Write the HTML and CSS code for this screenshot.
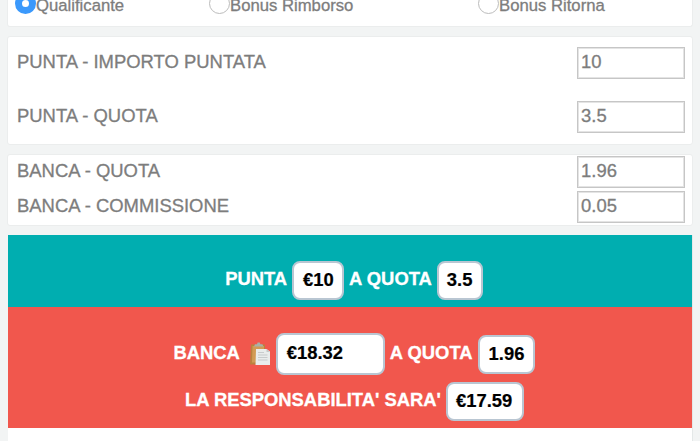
FILE: index.html
```html
<!DOCTYPE html>
<html lang="it">
<head>
<meta charset="utf-8">
<title>Calcolatore Punta Banca</title>
<link rel="stylesheet" href="styles.css">
</head>
<body>
<main class="page">
  <section class="card modes">
    <label class="mode"><span class="radio checked"></span><span class="mode-name">Qualificante</span></label>
    <label class="mode"><span class="radio"></span><span class="mode-name">Bonus Rimborso</span></label>
    <label class="mode"><span class="radio"></span><span class="mode-name">Bonus Ritorna</span></label>
  </section>
  <section class="card back">
    <div class="field"><span>PUNTA - IMPORTO PUNTATA</span><div class="input">10</div></div>
    <div class="field"><span>PUNTA - QUOTA</span><div class="input">3.5</div></div>
  </section>
  <section class="card lay">
    <div class="field"><span>BANCA - QUOTA</span><div class="input">1.96</div></div>
    <div class="field"><span>BANCA - COMMISSIONE</span><div class="input">0.05</div></div>
  </section>
  <section class="results">
    <div class="result-back">
      <div class="line"><span class="label">PUNTA</span><span class="value stake">€10</span><span class="label">A QUOTA</span><span class="value odds">3.5</span></div>
    </div>
    <div class="result-lay">
      <div class="line first"><span class="label">BANCA</span>
        <svg class="clipboard" viewBox="0 0 22 24">
          <path d="M2 2.500h14v20h-15z" fill="#b9823e"/>
          <path d="M3.500 4h11.500v16.500h-12z" fill="#d29b55"/>
          <path d="M5 4.500l1-2.300h2l.6-1.700h2.200l.6 1.700h2l1 2.300z" fill="#a9b0a8"/>
          <path d="M7 7h10.500l3.500 2.500v13.500h-14.500z" fill="#e9ecec"/>
          <path d="M17.500 7l3.500 3h-3.500z" fill="#c4c9c9"/>
          <path d="M9 10.500h6M9 13h9.500M9 15.500h9.500M9 18h9.500" stroke="#bfc3c5" stroke-width=".8"/>
        </svg>
        <span class="value amount">€18.32</span><span class="label">A QUOTA</span><span class="value lay-odds">1.96</span></div>
      <div class="line second"><span class="label">LA RESPONSABILITA' SARA'</span><span class="value liability">€17.59</span></div>
    </div>
  </section>
</main>
</body>
</html>
```
FILE: styles.css
```css
* { box-sizing: border-box; }
body {
  margin: 0;
  height: 441px;
  overflow: hidden;
  background: #f2f4f4;
  font-family: "Liberation Sans", Arial, sans-serif;
  color: #7d7d7d;
}
.page {
  display: flex;
  flex-direction: column;
  gap: 9px;
  padding: 0 7px;
}
.card {
  background: #fff;
  border: 1px solid #ebeded;
  border-radius: 3px;
  -webkit-text-stroke: 0.3px #7d7d7d;
}
.modes {
  height: 27px;
  border-top: 0;
  border-radius: 0 0 3px 3px;
  display: grid;
  grid-template-columns: 194px 269px 1fr;
  padding-left: 7px;
}
.mode {
  display: flex;
  height: 14px;
  align-items: flex-end;
  font-size: 16.7px;
  line-height: 18px;
  white-space: nowrap;
}
.mode-name { margin-bottom: -1px; }
.radio {
  width: 21px;
  height: 21px;
  flex: none;
  border: 1px solid #bcbcbc;
  border-radius: 50%;
  background: #fff;
}
.radio.checked { border: 7.500px solid #3b99fc; }
.back {
  height: 109px;
  padding: 10px 7px 0 9px;
  display: flex;
  flex-direction: column;
  gap: 22px;
}
.lay {
  height: 72px;
  padding: 1px 7px 0 9px;
  display: flex;
  flex-direction: column;
  gap: 3px;
}
.field {
  display: flex;
  justify-content: space-between;
  font-size: 18.450px;
  line-height: 30px;
}
.input {
  width: 108px;
  height: 32px;
  padding-left: 3px;
  border: 1px solid #c6c6c6;
  outline: 1px solid #e4e4e4;
  outline-offset: -2px;
  line-height: 28px;
}
.results {
  height: 220px;
  margin: 0 0 0 1px;
  width: 685px;
  border-right: 1px solid #e4e8e8;
  background: #fff;
  color: #fff;
  font-size: 18.400px;
  font-weight: bold;
}
.result-back {
  height: 72px;
  background: #00aeb0;
  padding-top: 26px;
}
.result-lay {
  height: 121px;
  background: #f1574d;
  padding-top: 26px;
}
.line {
  display: flex;
  justify-content: center;
  align-items: center;
  gap: 5px;
  height: 39px;
  padding-left: 8px;
  line-height: 36px;
  white-space: nowrap;
}
.line.first { height: 42px; }
.line.second { margin-top: 7px; padding-left: 9px; }
.label {
  margin-bottom: 3px;
  -webkit-text-stroke: 0.3px #fff;
}
.value {
  height: 39px;
  border: 2px solid #b9c6d2;
  border-radius: 8px;
  background: #fff;
  color: #000;
  padding-left: 9px;
  line-height: 33px;
  -webkit-text-stroke: 0.2px #000;
}
.stake { width: 52px; }
.odds { width: 46px; padding-left: 8px; }
.amount { width: 109px; height: 42px; line-height: 36px; }
.lay-odds { width: 57px; }
.liability { width: 78px; padding-left: 8px; }
.clipboard {
  width: 22px;
  height: 24px;
  margin-left: 4px;
}
```
